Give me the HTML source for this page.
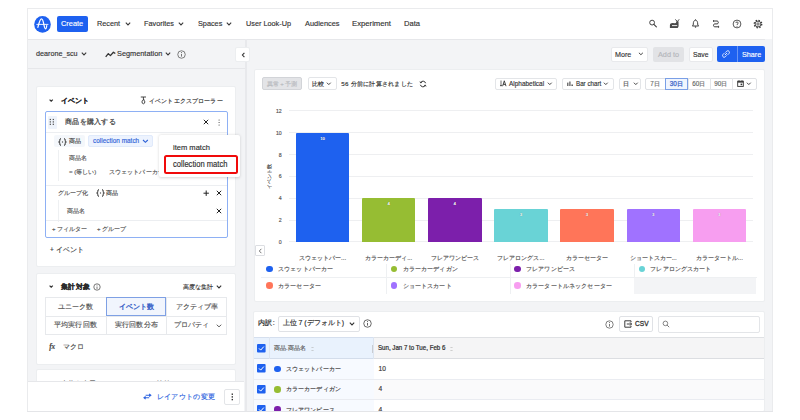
<!DOCTYPE html>
<html><head><meta charset="utf-8">
<style>
*{box-sizing:border-box;margin:0;padding:0}
html,body{width:800px;height:420px;overflow:hidden;background:#fff}
body{position:relative;font-family:"Liberation Sans",sans-serif;color:#3d3f45}
.a{position:absolute}
.t{position:absolute;white-space:nowrap;line-height:10px;height:10px;-webkit-text-stroke-width:0.15px}
.frame{left:27px;top:8px;width:746px;height:404px;border:1px solid #eaebed;background:#f3f4f6;overflow:hidden}
.card{position:absolute;background:#fff;border:1px solid #eceef0;border-radius:2px}
.btn{position:absolute;background:#fff;border:1px solid #dfe1e5;border-radius:2px}
.chev{position:absolute;width:4px;height:4px;border-right:1.2px solid #555;border-bottom:1.2px solid #555;transform:rotate(45deg)}
</style></head><body>
<div class="a frame"></div>
<!-- header -->
<div class="a" style="left:28px;top:9px;width:744px;height:30.6px;background:#fff;border-bottom:1px solid #e6e7ea"></div>

<!-- left toolbar border -->
<div class="a" style="left:28px;top:68px;width:217px;height:1px;background:#e6e7ea"></div>
<!-- divider strip -->
<div class="a" style="left:245px;top:39px;width:1.7px;height:372px;background:#e8e9ec"></div>

<!-- left cards -->
<div class="card" style="left:36px;top:86px;width:200px;height:181px"></div>
<div class="card" style="left:36px;top:273px;width:200px;height:92px"></div>
<div class="card" style="left:36px;top:369px;width:200px;height:40px"></div>
<!-- footer -->
<div class="a" style="left:28px;top:381px;width:216px;height:30px;background:#fff;border-top:1px solid #e6e7ea"></div>

<!-- right cards -->
<div class="card" style="left:253.5px;top:68.6px;width:511.7px;height:233.6px;border-color:#eceef0"></div>
<div class="card" style="left:253px;top:311px;width:512px;height:101px"></div>


<!-- HEADER CONTENT -->
<svg class="a" style="left:33.6px;top:15.6px" width="17" height="17" viewBox="0 0 17 17"><circle cx="8.5" cy="8.4" r="8.3" fill="#1e61f0"/><path d="M3.9 11.3 C4.9 7.4,5.9 2.8,7.45 2.8 C8.9 2.8,9.5 6.5,10.1 9.5 C10.5 11.5,10.9 12.8,11.45 12.8 C12.1 12.8,12.5 11.5,12.7 9.7" fill="none" stroke="#fff" stroke-width="1.25" stroke-linecap="round"/><path d="M2.4 8.4 H14.4" stroke="#fff" stroke-width="0.9"/></svg>
<div class="a" style="left:57px;top:15.5px;width:31px;height:16.5px;background:#1e61f0;border-radius:2px"></div>
<div class="t" style="left:61px;top:19.3px;font-size:7.92px;color:#fff;transform:scaleX(0.935);transform-origin:0 50%">Create</div>
<div class="t" style="left:97px;top:19.3px;font-size:7.81px;color:#333;transform:scaleX(0.935);transform-origin:0 50%">Recent</div>
<svg class="a" style="left:124.5px;top:21.8px" width="6" height="4"><path d="M0.8 0.7 L3 2.9 L5.2 0.7" fill="none" stroke="#3a3a3a" stroke-width="1.1"/></svg>
<div class="t" style="left:144px;top:19.3px;font-size:7.81px;color:#333;transform:scaleX(0.935);transform-origin:0 50%">Favorites</div>
<svg class="a" style="left:177.5px;top:21.8px" width="6" height="4"><path d="M0.8 0.7 L3 2.9 L5.2 0.7" fill="none" stroke="#3a3a3a" stroke-width="1.1"/></svg>
<div class="t" style="left:198px;top:19.3px;font-size:7.81px;color:#333;transform:scaleX(0.935);transform-origin:0 50%">Spaces</div>
<svg class="a" style="left:226px;top:21.8px" width="6" height="4"><path d="M0.8 0.7 L3 2.9 L5.2 0.7" fill="none" stroke="#3a3a3a" stroke-width="1.1"/></svg>
<div class="t" style="left:246px;top:19.3px;font-size:7.81px;color:#333;transform:scaleX(0.935);transform-origin:0 50%">User Look-Up</div>
<div class="t" style="left:304.5px;top:19.3px;font-size:7.92px;color:#333;transform:scaleX(0.935);transform-origin:0 50%">Audiences</div>
<div class="t" style="left:352px;top:19.3px;font-size:7.92px;color:#333;transform:scaleX(0.975);transform-origin:0 50%">Experiment</div>
<div class="t" style="left:404px;top:19.3px;font-size:7.92px;color:#333;transform:scaleX(0.96);transform-origin:0 50%">Data</div>
<!-- header icons -->
<svg class="a" style="left:648px;top:18px" width="10" height="10" viewBox="0 0 10 10"><circle cx="4.1" cy="4.6" r="2.4" fill="none" stroke="#3a3a3a" stroke-width="0.95"/><path d="M5.9 6.4 L8.4 8.9" stroke="#3a3a3a" stroke-width="1.05" stroke-linecap="round"/></svg>
<svg class="a" style="left:669px;top:19px" width="11" height="10" viewBox="0 0 11 10"><path d="M0.9 9.1 L0.9 6.4 C0.9 4.9,2 4.1,3.6 4.1 L6 4.2 C6.7 4.2,7.1 3.8,7.2 3.2 L7.4 2.2 L9.5 2.2 L9.6 6.5 C9.6 8,9 9.1,8 9.1 Z" fill="#4a4a4a"/><path d="M6.4 0.4 L8.3 2.6 L10.2 0.3" fill="none" stroke="#4a4a4a" stroke-width="1"/><path d="M3 6.6 H8.2" stroke="#fff" stroke-width="0.9"/></svg>
<svg class="a" style="left:691px;top:19.3px" width="9" height="10" viewBox="0 0 9 10"><path d="M1.3 7 L2.2 6.1 C2.3 5.3,2.3 4.5,2.4 3.7 C2.6 2.2,3.4 1.2,4.5 1.2 C5.6 1.2,6.4 2.2,6.6 3.7 C6.7 4.5,6.7 5.3,6.8 6.1 L7.7 7 Z" fill="none" stroke="#3a3a3a" stroke-width="0.95" stroke-linejoin="round"/><path d="M4.5 0.3 V1.2" stroke="#3a3a3a" stroke-width="0.8"/><circle cx="4.5" cy="8.1" r="0.75" fill="#3a3a3a"/></svg>
<svg class="a" style="left:712px;top:20px" width="8" height="8" viewBox="0 0 8 8"><path d="M1.2 1 H5.2 C6.7 1,6.7 3.9,5.2 3.9 H2.7 C1.1 3.9,1.1 6.8,2.7 6.8 H7" fill="none" stroke="#3a3a3a" stroke-width="1"/><path d="M2.1 0.1 L1 1 L2.1 1.9 M6.1 5.9 L7.1 6.8 L6.1 7.7" fill="none" stroke="#3a3a3a" stroke-width="0.8"/></svg>
<svg class="a" style="left:731.5px;top:18.6px" width="10" height="10" viewBox="0 0 10 10"><circle cx="5" cy="5" r="3.9" fill="none" stroke="#3a3a3a" stroke-width="0.85"/><path d="M3.8 4 C3.8 2.6,6.2 2.6,6.2 4 C6.2 4.9,5 5,5 6" fill="none" stroke="#3a3a3a" stroke-width="0.85"/><circle cx="5" cy="7.2" r="0.5" fill="#3a3a3a"/></svg>
<svg class="a" style="left:752.5px;top:18.5px" width="10" height="10" viewBox="0 0 10 10"><circle cx="5" cy="5" r="3.75" fill="none" stroke="#3a3a3a" stroke-width="1.3" stroke-dasharray="1.45 1.5"/><circle cx="5" cy="5" r="2.9" fill="none" stroke="#3a3a3a" stroke-width="0.9"/><circle cx="5" cy="5" r="1.15" fill="none" stroke="#3a3a3a" stroke-width="0.8"/></svg>


<!-- TOOLBAR -->
<div class="t" style="left:36px;top:49.2px;font-size:7.7px;color:#333;transform:scaleX(0.935);transform-origin:0 50%">dearone_scu</div>
<svg class="a" style="left:81px;top:51.8px" width="6" height="4"><path d="M0.8 0.7 L3 2.9 L5.2 0.7" fill="none" stroke="#3a3a3a" stroke-width="1.1"/></svg>
<svg class="a" style="left:104.5px;top:50.5px" width="11" height="7" viewBox="0 0 11 7"><path d="M0.7 5.8 L3.3 2.6 L5.4 4.6 L8.4 1.2 L10.3 2.6" fill="none" stroke="#333" stroke-width="1.3" stroke-linejoin="round"/></svg>
<div class="t" style="left:117px;top:49.2px;font-size:7.86px;color:#333;transform:scaleX(0.935);transform-origin:0 50%">Segmentation</div>
<svg class="a" style="left:165px;top:51.8px" width="6" height="4"><path d="M0.8 0.7 L3 2.9 L5.2 0.7" fill="none" stroke="#3a3a3a" stroke-width="1.1"/></svg>
<svg class="a" style="left:177.1px;top:49.6px" width="9" height="9" viewBox="0 0 9 9"><circle cx="4.5" cy="4.5" r="3.75" fill="none" stroke="#555" stroke-width="0.75"/><path d="M4.5 3.9 V6.6" stroke="#555" stroke-width="0.8"/><circle cx="4.5" cy="2.6" r="0.5" fill="#555"/></svg>
<div class="btn" style="left:235px;top:46.6px;width:15.4px;height:15.6px;border-color:#eceef0"></div>
<svg class="a" style="left:240.6px;top:51.6px" width="5" height="6"><path d="M3.4 0.8 L1.4 3 L3.4 5.2" fill="none" stroke="#333" stroke-width="1.1"/></svg>
<!-- right buttons -->
<div class="btn" style="left:610.8px;top:46.5px;width:37px;height:15px;border-color:#e8e9ec"></div>
<div class="t" style="left:614.9px;top:49.5px;font-size:7.65px;color:#333;transform:scaleX(0.935);transform-origin:0 50%">More</div>
<svg class="a" style="left:637.5px;top:52.3px" width="6" height="4"><path d="M0.9 0.8 L2.9 2.7 L4.9 0.8" fill="none" stroke="#444" stroke-width="1"/></svg>
<div class="a" style="left:653px;top:46.5px;width:30.5px;height:15px;background:#e2e3e6;border-radius:2px"></div>
<div class="t" style="left:657.6px;top:49.5px;font-size:7.81px;color:#b4b6bb;transform:scaleX(0.935);transform-origin:0 50%">Add to</div>
<div class="btn" style="left:688.5px;top:46.5px;width:24px;height:15px;border-color:#e8e9ec"></div>
<div class="t" style="left:692.6px;top:49.5px;font-size:7.28px;color:#333;transform:scaleX(0.935);transform-origin:0 50%">Save</div>
<div class="a" style="left:717.4px;top:46.3px;width:48px;height:15.5px;background:#1e61f0;border-radius:2px"></div>
<div class="a" style="left:737.2px;top:46.3px;width:0.8px;height:15.5px;background:#6a96f5"></div>
<svg class="a" style="left:721.5px;top:50px" width="8" height="8" viewBox="0 0 8 8"><path d="M3.3 2.6 L4.6 1.3 C5.3 0.6,6.4 0.6,7 1.3 C7.6 1.9,7.6 3,6.9 3.6 L5.6 4.9 M4.7 5.4 L3.4 6.7 C2.7 7.4,1.6 7.4,1 6.7 C0.4 6.1,0.4 5,1.1 4.4 L2.4 3.1 M2.9 5.1 L5.1 2.9" fill="none" stroke="#fff" stroke-width="0.9"/></svg>
<div class="t" style="left:742.1px;top:49.5px;font-size:7.7px;color:#fff;transform:scaleX(0.935);transform-origin:0 50%">Share</div>


<!-- LEFT CARD 1 -->
<svg class="a" style="left:48.5px;top:99px" width="5" height="3"><path d="M0.6 0.6 L2.2 2.2 L3.8 0.6" fill="none" stroke="#333" stroke-width="1.2"/></svg>
<div class="t" style="left:61px;top:95.5px;font-size:6.9px;font-weight:bold;color:#2b2b2b">イベント</div>
<svg class="a" style="left:139.5px;top:96px" width="7" height="9" viewBox="0 0 7 9"><path d="M0.8 1 H6 M3.4 1 V4 C1.5 4,1.5 7.8,3.4 7.8 C5.3 7.8,5.3 4,3.4 4" fill="none" stroke="#333" stroke-width="0.9"/><path d="M3.4 4 L4.2 3.2" stroke="#333" stroke-width="0.8"/></svg>
<div class="t" style="left:149px;top:95.8px;font-size:6.2px;color:#333;letter-spacing:0.14px">イベントエクスプローラー</div>
<div class="a" style="left:45px;top:111.3px;width:183px;height:126.5px;border:1px solid #8eb0f4;border-radius:2px"></div>
<div class="a" style="left:47.5px;top:115.5px;width:9.5px;height:13px;background:#eef3fb;border-radius:1px"></div>
<svg class="a" style="left:49px;top:117.5px" width="6" height="8"><g fill="#555"><rect x="0.7" y="0.9" width="1.3" height="1.2"/><rect x="3.7" y="0.9" width="1.3" height="1.2"/><rect x="0.7" y="3.3" width="1.3" height="1.2"/><rect x="3.7" y="3.3" width="1.3" height="1.2"/><rect x="0.7" y="5.7" width="1.3" height="1.2"/><rect x="3.7" y="5.7" width="1.3" height="1.2"/></g></svg>
<div class="t" style="left:65px;top:116.8px;font-size:7.45px;color:#3d3d3d;-webkit-text-stroke:0.2px #3d3d3d;letter-spacing:0.28px">商品を購入する</div>
<svg class="a" style="left:202.5px;top:119px" width="6" height="6"><path d="M0.8 0.8 L5.2 5.2 M5.2 0.8 L0.8 5.2" stroke="#222" stroke-width="1"/></svg>
<svg class="a" style="left:217.8px;top:118.8px" width="3" height="8"><g fill="#444"><circle cx="1.1" cy="1" r="0.6"/><circle cx="1.1" cy="3.5" r="0.6"/><circle cx="1.1" cy="6" r="0.6"/></g></svg>
<div class="a" style="left:46px;top:131.5px;width:181px;height:1px;background:#eceef1"></div>
<div class="a" style="left:54px;top:135.4px;width:31px;height:12px;background:#f4f7fb;border-radius:2px"></div>
<svg class="a" style="left:57.5px;top:137.5px" width="9" height="8" viewBox="0 0 9 8"><path d="M3 0.6 Q1.7 0.6 1.8 2.1 L1.8 3.1 Q1.8 4 0.6 4 Q1.8 4 1.8 4.9 L1.8 5.9 Q1.7 7.4 3 7.4 M6 0.6 Q7.3 0.6 7.2 2.1 L7.2 3.1 Q7.2 4 8.4 4 Q7.2 4 7.2 4.9 L7.2 5.9 Q7.3 7.4 6 7.4" fill="none" stroke="#333" stroke-width="1"/><circle cx="4.5" cy="4" r="0.7" fill="#555"/></svg>
<div class="t" style="left:69px;top:136.3px;font-size:6px;color:#444">商品</div>
<div class="a" style="left:88.3px;top:135.4px;width:64.5px;height:12px;background:#edf3fe;border:1px solid #e0eafb;border-radius:2px"></div>
<div class="t" style="left:92.5px;top:136.4px;font-size:6.9px;color:#2f63d8;transform:scaleX(0.935);transform-origin:0 50%">collection match</div>
<svg class="a" style="left:141.5px;top:139.3px" width="7" height="5"><path d="M1 1 L3.4 3.3 L5.8 1" fill="none" stroke="#2f63d8" stroke-width="1.15"/></svg>
<div class="a" style="left:57.5px;top:149.6px;width:1px;height:31px;background:#eef0f2"></div>
<div class="t" style="left:69px;top:153px;font-size:6.1px;color:#555">商品名</div>
<div class="t" style="left:69px;top:167.3px;font-size:6.1px;color:#555">= (等しい)</div>
<div class="t" style="left:108.8px;top:167.3px;font-size:6.1px;color:#555;letter-spacing:0.13px">スウェットパーカー</div>
<div class="a" style="left:46px;top:184.5px;width:181px;height:1px;background:#eceef1"></div>
<div class="t" style="left:57.5px;top:188.3px;font-size:6px;color:#555">グループ化</div>
<svg class="a" style="left:95.5px;top:189.3px" width="9" height="8" viewBox="0 0 9 8"><path d="M3 0.6 Q1.7 0.6 1.8 2.1 L1.8 3.1 Q1.8 4 0.6 4 Q1.8 4 1.8 4.9 L1.8 5.9 Q1.7 7.4 3 7.4 M6 0.6 Q7.3 0.6 7.2 2.1 L7.2 3.1 Q7.2 4 8.4 4 Q7.2 4 7.2 4.9 L7.2 5.9 Q7.3 7.4 6 7.4" fill="none" stroke="#333" stroke-width="1"/><circle cx="4.5" cy="4" r="0.7" fill="#555"/></svg>
<div class="t" style="left:106px;top:188.3px;font-size:6.3px;color:#444">商品</div>
<svg class="a" style="left:202.8px;top:190.1px" width="7" height="7"><path d="M3.2 0.5 V5.9 M0.5 3.2 H5.9" stroke="#222" stroke-width="1"/></svg>
<svg class="a" style="left:215.8px;top:190.3px" width="6" height="6"><path d="M0.8 0.8 L5.2 5.2 M5.2 0.8 L0.8 5.2" stroke="#222" stroke-width="1"/></svg>
<div class="a" style="left:57.5px;top:199.5px;width:1px;height:22px;background:#eef0f2"></div>
<div class="t" style="left:67px;top:205.5px;font-size:6.1px;color:#555">商品名</div>
<svg class="a" style="left:215.8px;top:207.5px" width="6" height="6"><path d="M0.8 0.8 L5.2 5.2 M5.2 0.8 L0.8 5.2" stroke="#222" stroke-width="1"/></svg>
<div class="a" style="left:46px;top:220.3px;width:181px;height:1px;background:#eceef1"></div>
<div class="t" style="left:52px;top:223.8px;font-size:6px;color:#555">+ フィルター</div>
<div class="t" style="left:97px;top:223.8px;font-size:6px;color:#555">+ グループ</div>
<div class="t" style="left:50px;top:245px;font-size:6.5px;color:#444">+ イベント</div>
<!-- POPOVER -->
<div class="a" style="left:159.3px;top:135.3px;width:81px;height:42px;background:#fff;border-radius:2px;box-shadow:0 0.5px 3px rgba(0,0,0,0.16)"></div>
<div class="t" style="left:172.9px;top:143.4px;font-size:8.08px;color:#2e2e2e;transform:scaleX(0.935);transform-origin:0 50%">item match</div>
<div class="a" style="left:164.2px;top:155.2px;width:73.5px;height:19.2px;border:2.2px solid #f00a0a;border-radius:2.5px"></div>
<div class="t" style="left:172.9px;top:160.2px;font-size:8.13px;color:#2e2e2e;transform:scaleX(0.935);transform-origin:0 50%">collection match</div>


<!-- LEFT CARD 2 -->
<svg class="a" style="left:48.5px;top:285.3px" width="5" height="3"><path d="M0.6 0.6 L2.2 2.2 L3.8 0.6" fill="none" stroke="#333" stroke-width="1.2"/></svg>
<div class="t" style="left:60.9px;top:281.6px;font-size:7.35px;font-weight:bold;color:#2b2b2b;letter-spacing:0.35px">集計対象</div>
<svg class="a" style="left:92.5px;top:282.6px" width="8" height="8" viewBox="0 0 8 8"><circle cx="4" cy="4" r="3.2" fill="none" stroke="#555" stroke-width="0.8"/><path d="M4 3.5 V5.9" stroke="#555" stroke-width="0.8"/><circle cx="4" cy="2.3" r="0.45" fill="#555"/></svg>
<div class="t" style="left:182.7px;top:281.6px;font-size:6.06px;color:#333">高度な集計</div>
<svg class="a" style="left:216px;top:285px" width="6" height="4"><path d="M0.8 0.7 L3 2.9 L5.2 0.7" fill="none" stroke="#333" stroke-width="1.1"/></svg>
<div class="a" style="left:45.4px;top:297.4px;width:181.6px;height:37.2px;border:1px solid #e7e9ec"></div>
<div class="a" style="left:45.4px;top:315.6px;width:181.6px;height:1px;background:#e7e9ec"></div>
<div class="a" style="left:105.8px;top:297.4px;width:1px;height:37.2px;background:#e7e9ec"></div>
<div class="a" style="left:166.1px;top:297.4px;width:1px;height:37.2px;background:#e7e9ec"></div>
<div class="a" style="left:106.2px;top:297.4px;width:60.3px;height:18.5px;background:#f1f5fd;border:1px solid #7ea0e4"></div>
<div class="t" style="left:57.8px;top:301.7px;font-size:7.1px;color:#555;letter-spacing:0.12px">ユニーク数</div>
<div class="t" style="left:118.9px;top:301.6px;font-size:7.02px;color:#3a63c8;-webkit-text-stroke-width:0.35px">イベント数</div>
<div class="t" style="left:175.9px;top:301.7px;font-size:7.03px;color:#555">アクティブ率</div>
<div class="t" style="left:53.6px;top:320.3px;font-size:7.25px;color:#555;letter-spacing:0.28px">平均実行回数</div>
<div class="t" style="left:114.8px;top:320.2px;font-size:7.2px;color:#555;letter-spacing:0.23px">実行回数分布</div>
<div class="t" style="left:174.2px;top:320.1px;font-size:6.9px;color:#555">プロパティ</div>
<svg class="a" style="left:215.6px;top:323.5px" width="6" height="4"><path d="M0.8 0.7 L3 2.9 L5.2 0.7" fill="none" stroke="#555" stroke-width="1"/></svg>
<div class="t" style="left:49.2px;top:342px;font-size:7.2px;font-weight:bold;font-style:italic;color:#444;font-family:'Liberation Serif',serif">fx</div>
<div class="t" style="left:62.5px;top:342px;font-size:7px;color:#555">マクロ</div>
<!-- LEFT CARD 3 (peek) -->
<div class="a" style="left:28px;top:369px;width:216px;height:12.4px;overflow:hidden">
<div class="t" style="left:33px;top:10.2px;font-size:7.2px;color:#555">上位を表示 (</div><div class="t" style="left:129px;top:10.2px;font-size:7.2px;color:#777">比較</div>
</div>
<!-- FOOTER CONTENT -->
<svg class="a" style="left:143px;top:393px" width="9" height="7" viewBox="0 0 9 7"><path d="M2.6 2.2 H7.6 M6.2 0.9 L7.8 2.2 L6.2 3.5" fill="none" stroke="#2f65e0" stroke-width="1.1"/><path d="M6.2 4.8 H1.2 M2.6 3.5 L1 4.8 L2.6 6.1" fill="none" stroke="#2f65e0" stroke-width="1.1"/></svg>
<div class="t" style="left:156.7px;top:391.8px;font-size:7.45px;color:#2f65e0;letter-spacing:0.33px">レイアウトの変更</div>
<div class="btn" style="left:224.4px;top:389px;width:16px;height:15.8px;border-color:#e3e5e8"></div>
<svg class="a" style="left:231px;top:393px" width="3" height="8"><g fill="#333"><rect x="0.6" y="0.5" width="1.4" height="1.4"/><rect x="0.6" y="3.2" width="1.4" height="1.4"/><rect x="0.6" y="5.9" width="1.4" height="1.4"/></g></svg>


<!-- CHART CARD TOP CONTROLS -->
<div class="a" style="left:262px;top:77.4px;width:40.4px;height:12.8px;background:#e3e4e7;border:1px solid #d2d4d8;border-radius:2px"></div>
<div class="t" style="left:266.6px;top:79px;font-size:6px;color:#b9bbc0">異常 + 予測</div>
<div class="btn" style="left:307.5px;top:77.4px;width:29.3px;height:12.8px;border-color:#e3e5e8"></div>
<div class="t" style="left:312px;top:79px;font-size:5.9px;color:#333">比較</div>
<svg class="a" style="left:326.3px;top:82.3px" width="6" height="4"><path d="M0.9 0.7 L2.8 2.6 L4.7 0.7" fill="none" stroke="#444" stroke-width="1"/></svg>
<div class="t" style="left:341.3px;top:79px;font-size:6.2px;color:#333;letter-spacing:0.26px">56 分前に計算されました</div>
<svg class="a" style="left:418.5px;top:80px" width="8" height="8" viewBox="0 0 8 8"><path d="M6.6 3.2 A2.7 2.7 0 0 0 1.6 2.6 M1.4 4.8 A2.7 2.7 0 0 0 6.4 5.4" fill="none" stroke="#333" stroke-width="1"/><path d="M1 1.5 L1.6 2.9 L3 2.4 M7 6.5 L6.4 5.1 L5 5.6" fill="none" stroke="#333" stroke-width="0.9"/></svg>
<div class="btn" style="left:495.3px;top:77.6px;width:61.6px;height:12px;border-color:#e3e5e8"></div>
<svg class="a" style="left:499.5px;top:80px" width="7" height="7" viewBox="0 0 7 7"><path d="M1 0.5 V6 M0.1 5 L1 6.2 L1.9 5" fill="none" stroke="#333" stroke-width="0.7"/><path d="M2.6 6.2 L4.3 0.8 L6 6.2 M3.2 4.4 H5.4" fill="none" stroke="#333" stroke-width="0.9"/></svg>
<div class="t" style="left:509px;top:78.6px;font-size:6.9px;color:#333;transform:scaleX(0.935);transform-origin:0 50%">Alphabetical</div>
<svg class="a" style="left:547px;top:82px" width="6" height="4"><path d="M0.9 0.7 L2.8 2.6 L4.7 0.7" fill="none" stroke="#444" stroke-width="1"/></svg>
<div class="btn" style="left:561.8px;top:77.6px;width:52.1px;height:12px;border-color:#e3e5e8"></div>
<svg class="a" style="left:566.5px;top:80px" width="7" height="7"><g fill="#3a3a3a"><rect x="0.3" y="2.6" width="1.05" height="3.4"/><rect x="2.4" y="1.5" width="1.05" height="4.5"/><rect x="4.5" y="4.5" width="1.3" height="1.5"/></g></svg>
<div class="t" style="left:575.8px;top:78.7px;font-size:6.7px;color:#333;transform:scaleX(0.93);transform-origin:0 50%">Bar chart</div>
<svg class="a" style="left:603px;top:82px" width="6" height="4"><path d="M0.9 0.7 L2.8 2.6 L4.7 0.7" fill="none" stroke="#444" stroke-width="1"/></svg>
<div class="btn" style="left:618.8px;top:77.6px;width:22.5px;height:12.2px;border-color:#e3e5e8"></div>
<div class="t" style="left:622.8px;top:78.8px;font-size:6.3px;color:#444">日</div>
<svg class="a" style="left:632.5px;top:82px" width="6" height="4"><path d="M0.9 0.7 L2.8 2.6 L4.7 0.7" fill="none" stroke="#444" stroke-width="1"/></svg>
<div class="btn" style="left:645.4px;top:77.6px;width:111.2px;height:12.2px;border-color:#dfe1e5"></div>
<div class="a" style="left:664.5px;top:77.6px;width:1px;height:12.2px;background:#e3e5e8"></div>
<div class="a" style="left:687.6px;top:77.6px;width:1px;height:12.2px;background:#e3e5e8"></div>
<div class="a" style="left:709.7px;top:77.6px;width:1px;height:12.2px;background:#e3e5e8"></div>
<div class="a" style="left:732.2px;top:77.6px;width:1px;height:12.2px;background:#e3e5e8"></div>
<div class="a" style="left:664.7px;top:77.6px;width:23px;height:12.2px;background:#f0f5fe;border:1px solid #7a9fe6"></div>
<div class="t" style="left:650.3px;top:78.8px;font-size:6.3px;color:#666">7日</div>
<div class="t" style="left:669.8px;top:78.8px;font-size:6.4px;color:#3a63c8;-webkit-text-stroke-width:0.25px">30日</div>
<div class="t" style="left:692.2px;top:78.8px;font-size:6.3px;color:#666">60日</div>
<div class="t" style="left:714.3px;top:78.8px;font-size:6.3px;color:#666">90日</div>
<svg class="a" style="left:736.5px;top:80px" width="7" height="7" viewBox="0 0 7 7"><rect x="0.7" y="1.2" width="5.6" height="5.2" fill="none" stroke="#333" stroke-width="0.9"/><rect x="0.7" y="1.2" width="5.6" height="1.4" fill="#333"/><path d="M2 0.2 V1.5 M5 0.2 V1.5" stroke="#333" stroke-width="0.8"/><rect x="3.6" y="3.6" width="1.6" height="1.6" fill="#333"/></svg>
<svg class="a" style="left:746px;top:82px" width="6" height="4"><path d="M0.9 0.7 L2.8 2.6 L4.7 0.7" fill="none" stroke="#444" stroke-width="1"/></svg>

<div class="a" style="left:288.6px;top:110.2px;width:464.4px;height:1px;background:#eeeff1"></div>
<div class="t" style="left:261.2px;width:20.5px;text-align:right;top:105.7px;font-size:5.2px;color:#555">12</div>
<div class="a" style="left:288.6px;top:132.4px;width:464.4px;height:1px;background:#eeeff1"></div>
<div class="t" style="left:261.2px;width:20.5px;text-align:right;top:127.9px;font-size:5.2px;color:#555">10</div>
<div class="a" style="left:288.6px;top:154.1px;width:464.4px;height:1px;background:#eeeff1"></div>
<div class="t" style="left:261.2px;width:20.5px;text-align:right;top:149.6px;font-size:5.2px;color:#555">8</div>
<div class="a" style="left:288.6px;top:175.9px;width:464.4px;height:1px;background:#eeeff1"></div>
<div class="t" style="left:261.2px;width:20.5px;text-align:right;top:171.4px;font-size:5.2px;color:#555">6</div>
<div class="a" style="left:288.6px;top:197.7px;width:464.4px;height:1px;background:#eeeff1"></div>
<div class="t" style="left:261.2px;width:20.5px;text-align:right;top:193.2px;font-size:5.2px;color:#555">4</div>
<div class="a" style="left:288.6px;top:219.9px;width:464.4px;height:1px;background:#eeeff1"></div>
<div class="t" style="left:261.2px;width:20.5px;text-align:right;top:215.4px;font-size:5.2px;color:#555">2</div>
<div class="a" style="left:288.6px;top:241.3px;width:464.4px;height:1px;background:#eeeff1"></div>
<div class="t" style="left:261.2px;width:20.5px;text-align:right;top:236.8px;font-size:5.2px;color:#555">0</div>
<div class="a" style="left:269px;top:175.8px;width:0;height:0"><div class="t" style="left:-20px;top:-5px;width:40px;text-align:center;font-size:5.1px;color:#555;transform:rotate(-90deg)">イベント数</div></div>
<div class="a" style="left:295.9px;top:132.90px;width:53.4px;height:109.30px;background:#1e61ef;border-radius:1px 1px 0 0"></div>
<div class="t" style="left:295.9px;width:53.4px;text-align:center;top:133.5px;font-size:4.4px;font-weight:bold;color:#fff;-webkit-text-stroke-width:0;text-shadow:0 0 0.8px rgba(0,0,0,0.45)">10</div>
<div class="t" style="left:285.9px;width:73.4px;text-align:center;top:252.5px;font-size:6.1px;color:#555">スウェットパー...</div>
<div class="a" style="left:362.02px;top:198.48px;width:53.4px;height:43.72px;background:#96bd33;border-radius:1px 1px 0 0"></div>
<div class="t" style="left:362.02px;width:53.4px;text-align:center;top:199.1px;font-size:4.4px;font-weight:bold;color:#fff;-webkit-text-stroke-width:0;text-shadow:0 0 0.8px rgba(0,0,0,0.45)">4</div>
<div class="t" style="left:352.02px;width:73.4px;text-align:center;top:252.5px;font-size:6.1px;color:#555">カラーカーディ...</div>
<div class="a" style="left:428.14px;top:198.48px;width:53.4px;height:43.72px;background:#7c1fab;border-radius:1px 1px 0 0"></div>
<div class="t" style="left:428.14px;width:53.4px;text-align:center;top:199.1px;font-size:4.4px;font-weight:bold;color:#fff;-webkit-text-stroke-width:0;text-shadow:0 0 0.8px rgba(0,0,0,0.45)">4</div>
<div class="t" style="left:418.14px;width:73.4px;text-align:center;top:252.5px;font-size:6.1px;color:#555">フレアワンピース</div>
<div class="a" style="left:494.26px;top:209.41px;width:53.4px;height:32.79px;background:#69d3d6;border-radius:1px 1px 0 0"></div>
<div class="t" style="left:494.26px;width:53.4px;text-align:center;top:210.0px;font-size:4.4px;font-weight:bold;color:#fff;-webkit-text-stroke-width:0;text-shadow:0 0 0.8px rgba(0,0,0,0.45)">3</div>
<div class="t" style="left:484.26px;width:73.4px;text-align:center;top:252.5px;font-size:6.1px;color:#555">フレアロングス...</div>
<div class="a" style="left:560.38px;top:209.41px;width:53.4px;height:32.79px;background:#ff7559;border-radius:1px 1px 0 0"></div>
<div class="t" style="left:560.38px;width:53.4px;text-align:center;top:210.0px;font-size:4.4px;font-weight:bold;color:#fff;-webkit-text-stroke-width:0;text-shadow:0 0 0.8px rgba(0,0,0,0.45)">3</div>
<div class="t" style="left:550.38px;width:73.4px;text-align:center;top:252.5px;font-size:6.1px;color:#555">カラーセーター</div>
<div class="a" style="left:626.5px;top:209.41px;width:53.4px;height:32.79px;background:#a072ff;border-radius:1px 1px 0 0"></div>
<div class="t" style="left:626.5px;width:53.4px;text-align:center;top:210.0px;font-size:4.4px;font-weight:bold;color:#fff;-webkit-text-stroke-width:0;text-shadow:0 0 0.8px rgba(0,0,0,0.45)">3</div>
<div class="t" style="left:616.5px;width:73.4px;text-align:center;top:252.5px;font-size:6.1px;color:#555">ショートスカー...</div>
<div class="a" style="left:692.62px;top:209.41px;width:53.4px;height:32.79px;background:#f79ef0;border-radius:1px 1px 0 0"></div>
<div class="t" style="left:692.62px;width:53.4px;text-align:center;top:210.0px;font-size:4.4px;font-weight:bold;color:#fff;-webkit-text-stroke-width:0;text-shadow:0 0 0.8px rgba(0,0,0,0.45)">3</div>
<div class="t" style="left:682.62px;width:73.4px;text-align:center;top:252.5px;font-size:6.1px;color:#555">カラータートル...</div>
<div class="btn" style="left:255px;top:245px;width:9.5px;height:10.5px;border-color:#dcdee2;border-radius:1px"></div>
<svg class="a" style="left:257.5px;top:247.5px" width="5" height="6"><path d="M3.4 0.8 L1.3 3 L3.4 5.2" fill="none" stroke="#666" stroke-width="0.9"/></svg>
<div class="a" style="left:261px;top:277.2px;width:495.5px;height:0.8px;background:#eef0f2"></div>
<div class="a" style="left:386.3px;top:263.5px;width:0.8px;height:30.5px;background:#eef0f2"></div>
<div class="a" style="left:510px;top:263.5px;width:0.8px;height:30.5px;background:#eef0f2"></div>
<div class="a" style="left:634.3px;top:263.5px;width:0.8px;height:30.5px;background:#eef0f2"></div>
<div class="a" style="left:634.3px;top:277.7px;width:122.2px;height:16.2px;background:#f3f4f6"></div>
<div class="a" style="left:266.2px;top:265.5px;width:6.6px;height:6.6px;border-radius:50%;background:#1e61ef"></div>
<div class="t" style="left:278.0px;top:263.8px;font-size:6.1px;color:#555;letter-spacing:0.13px">スウェットパーカー</div>
<div class="a" style="left:390.8px;top:265.5px;width:6.6px;height:6.6px;border-radius:50%;background:#96bd33"></div>
<div class="t" style="left:402.6px;top:263.8px;font-size:6.1px;color:#555;letter-spacing:0.13px">カラーカーディガン</div>
<div class="a" style="left:514.3px;top:265.5px;width:6.6px;height:6.6px;border-radius:50%;background:#7c1fab"></div>
<div class="t" style="left:526.1px;top:263.8px;font-size:6.1px;color:#555;letter-spacing:0.13px">フレアワンピース</div>
<div class="a" style="left:638.5px;top:265.5px;width:6.6px;height:6.6px;border-radius:50%;background:#69d3d6"></div>
<div class="t" style="left:650.3px;top:263.8px;font-size:6.1px;color:#555;letter-spacing:0.13px">フレアロングスカート</div>
<div class="a" style="left:266.2px;top:282.3px;width:6.6px;height:6.6px;border-radius:50%;background:#ff7559"></div>
<div class="t" style="left:278.0px;top:280.6px;font-size:6.1px;color:#555;letter-spacing:0.13px">カラーセーター</div>
<div class="a" style="left:390.8px;top:282.3px;width:6.6px;height:6.6px;border-radius:50%;background:#a072ff"></div>
<div class="t" style="left:402.6px;top:280.6px;font-size:6.1px;color:#555;letter-spacing:0.13px">ショートスカート</div>
<div class="a" style="left:514.3px;top:282.3px;width:6.6px;height:6.6px;border-radius:50%;background:#f79ef0"></div>
<div class="t" style="left:526.1px;top:280.6px;font-size:6.1px;color:#555;letter-spacing:0.13px">カラータートルネックセーター</div>

<!-- TABLE CARD -->
<div class="t" style="left:258px;top:318.4px;font-size:7.1px;color:#2a2a2a;-webkit-text-stroke:0.2px #2a2a2a;letter-spacing:0.4px">内訳:</div>
<div class="btn" style="left:277.5px;top:315.6px;width:82.8px;height:16.2px;border-color:#e0e2e6"></div>
<div class="t" style="left:282.5px;top:318.4px;font-size:7.05px;color:#2a2a2a;-webkit-text-stroke:0.15px #2a2a2a">上位 7 (デフォルト)</div>
<svg class="a" style="left:349px;top:321.8px" width="6" height="4"><path d="M0.8 0.7 L3 2.9 L5.2 0.7" fill="none" stroke="#333" stroke-width="1.1"/></svg>
<svg class="a" style="left:363px;top:319px" width="9" height="9" viewBox="0 0 9 9"><circle cx="4.5" cy="4.5" r="3.75" fill="none" stroke="#444" stroke-width="0.8"/><path d="M4.5 3.9 V6.6" stroke="#444" stroke-width="0.85"/><circle cx="4.5" cy="2.6" r="0.5" fill="#444"/></svg>
<svg class="a" style="left:604.5px;top:319.5px" width="9" height="9" viewBox="0 0 9 9"><circle cx="4.5" cy="4.5" r="3.7" fill="none" stroke="#555" stroke-width="0.75"/><path d="M4.5 3.9 V6.6" stroke="#555" stroke-width="0.8"/><circle cx="4.5" cy="2.6" r="0.5" fill="#555"/></svg>
<div class="btn" style="left:618.5px;top:316.2px;width:34.5px;height:16.1px;border-color:#e0e2e6"></div>
<svg class="a" style="left:623.8px;top:320px" width="9" height="8" viewBox="0 0 9 8"><path d="M7 2.2 V0.8 H0.8 V7.2 H7 V5.8" fill="none" stroke="#333" stroke-width="0.95"/><path d="M2.8 4 H7.6 M6 2.4 L7.6 4 L6 5.6" fill="none" stroke="#333" stroke-width="0.95"/></svg>
<div class="t" style="left:635px;top:319px;font-size:7.06px;color:#333;-webkit-text-stroke-width:0.3px;transform:scaleX(0.935);transform-origin:0 50%">CSV</div>
<div class="btn" style="left:657.7px;top:316px;width:102.8px;height:16.5px;border-color:#e3e5e8"></div>
<svg class="a" style="left:662px;top:320px" width="8" height="8" viewBox="0 0 8 8"><circle cx="3.4" cy="3.4" r="2.3" fill="none" stroke="#777" stroke-width="0.9"/><path d="M5.1 5.1 L7.2 7.2" stroke="#777" stroke-width="1"/></svg>
<!-- table header -->
<div class="a" style="left:253.5px;top:337px;width:510.8px;height:21.7px;background:#f5f5f6;border-top:1px solid #dfe1e4;border-bottom:1px solid #dcdee2"></div>
<div class="a" style="left:253.5px;top:337px;width:120.4px;height:21.7px;background:#e9f2fd;border-top:1px solid #d5dfee;border-bottom:1px solid #d3ddeb"></div>
<div class="a" style="left:269.1px;top:337px;width:0.8px;height:75px;background:#dfe6f0"></div>
<div class="a" style="left:373px;top:337px;width:1px;height:75px;background:#dde5f0"></div>
<div class="a" style="left:371.7px;top:344.5px;width:0.8px;height:8px;background:#c9ccd1"></div>
<div class="t" style="left:273.9px;top:342.7px;font-size:5.9px;color:#5a5a5a">商品.商品名</div>
<svg class="a" style="left:311.2px;top:345.5px" width="3" height="6"><path d="M0.5 2 L1.5 1 L2.5 2 M0.5 4 L1.5 5 L2.5 4" fill="none" stroke="#aaa" stroke-width="0.6"/></svg>
<div class="t" style="left:377.5px;top:342.7px;font-size:6.58px;color:#2a2a2a;-webkit-text-stroke:0.2px #2a2a2a;transform:scaleX(0.935);transform-origin:0 50%">Sun, Jan 7 to Tue, Feb 6</div>
<svg class="a" style="left:449.8px;top:345.5px" width="3" height="6"><path d="M0.5 2 L1.5 1 L2.5 2 M0.5 4 L1.5 5 L2.5 4" fill="none" stroke="#aaa" stroke-width="0.6"/></svg>

<svg class="a" style="left:257.2px;top:344px" width="9" height="9" viewBox="0 0 9 9"><rect x="0" y="0" width="8.6" height="8.6" rx="1" fill="#1e61ef"/><path d="M2 4.4 L3.7 6.1 L6.8 2.6" fill="none" stroke="#fff" stroke-width="1"/></svg>
<div class="a" style="left:253.5px;top:358.70px;width:120px;height:20.8px;background:#f7faff"></div>
<div class="a" style="left:253.5px;top:378.60px;width:510.5px;height:0.9px;background:#eaecf1"></div>
<svg class="a" style="left:257.2px;top:364.4px" width="9" height="9" viewBox="0 0 9 9"><rect x="0" y="0" width="8.6" height="8.6" rx="1" fill="#1e61ef"/><path d="M2 4.4 L3.7 6.1 L6.8 2.6" fill="none" stroke="#fff" stroke-width="1"/></svg>
<div class="a" style="left:274.3px;top:365.5px;width:6.4px;height:6.4px;border-radius:50%;background:#1e61ef"></div>
<div class="t" style="left:285.8px;top:363.7px;font-size:6.15px;color:#444;letter-spacing:0.13px">スウェットパーカー</div>
<div class="t" style="left:378.5px;top:363.7px;font-size:6.6px;color:#333">10</div>
<div class="a" style="left:373.5px;top:379.50px;width:390.5px;height:20.8px;background:#fafafb"></div>
<div class="a" style="left:253.5px;top:379.50px;width:120px;height:20.8px;background:#f7faff"></div>
<div class="a" style="left:253.5px;top:399.40px;width:510.5px;height:0.9px;background:#eaecf1"></div>
<svg class="a" style="left:257.2px;top:385.1px" width="9" height="9" viewBox="0 0 9 9"><rect x="0" y="0" width="8.6" height="8.6" rx="1" fill="#1e61ef"/><path d="M2 4.4 L3.7 6.1 L6.8 2.6" fill="none" stroke="#fff" stroke-width="1"/></svg>
<div class="a" style="left:274.3px;top:386.2px;width:6.4px;height:6.4px;border-radius:50%;background:#96bd33"></div>
<div class="t" style="left:285.8px;top:384.4px;font-size:6.15px;color:#444;letter-spacing:0.13px">カラーカーディガン</div>
<div class="t" style="left:378.5px;top:384.4px;font-size:6.6px;color:#333">4</div>
<div class="a" style="left:253.5px;top:400.30px;width:120px;height:20.8px;background:#f7faff"></div>
<div class="a" style="left:253.5px;top:420.20px;width:510.5px;height:0.9px;background:#eaecf1"></div>
<svg class="a" style="left:257.2px;top:405.3px" width="9" height="9" viewBox="0 0 9 9"><rect x="0" y="0" width="8.6" height="8.6" rx="1" fill="#1e61ef"/><path d="M2 4.4 L3.7 6.1 L6.8 2.6" fill="none" stroke="#fff" stroke-width="1"/></svg>
<div class="a" style="left:274.3px;top:406.4px;width:6.4px;height:6.4px;border-radius:50%;background:#7c1fab"></div>
<div class="t" style="left:285.8px;top:404.6px;font-size:6.15px;color:#444;letter-spacing:0.13px">フレアワンピース</div>
<div class="t" style="left:378.5px;top:404.6px;font-size:6.6px;color:#333">4</div>

<!-- bottom clip -->
<div class="a" style="left:27px;top:411px;width:746px;height:1px;background:#e4e5e8"></div>
<div class="a" style="left:0;top:412px;width:800px;height:8px;background:#fff"></div>
<div class="a" style="left:765px;top:39px;width:7px;height:372px;background:#f3f4f6"></div>

</body></html>
